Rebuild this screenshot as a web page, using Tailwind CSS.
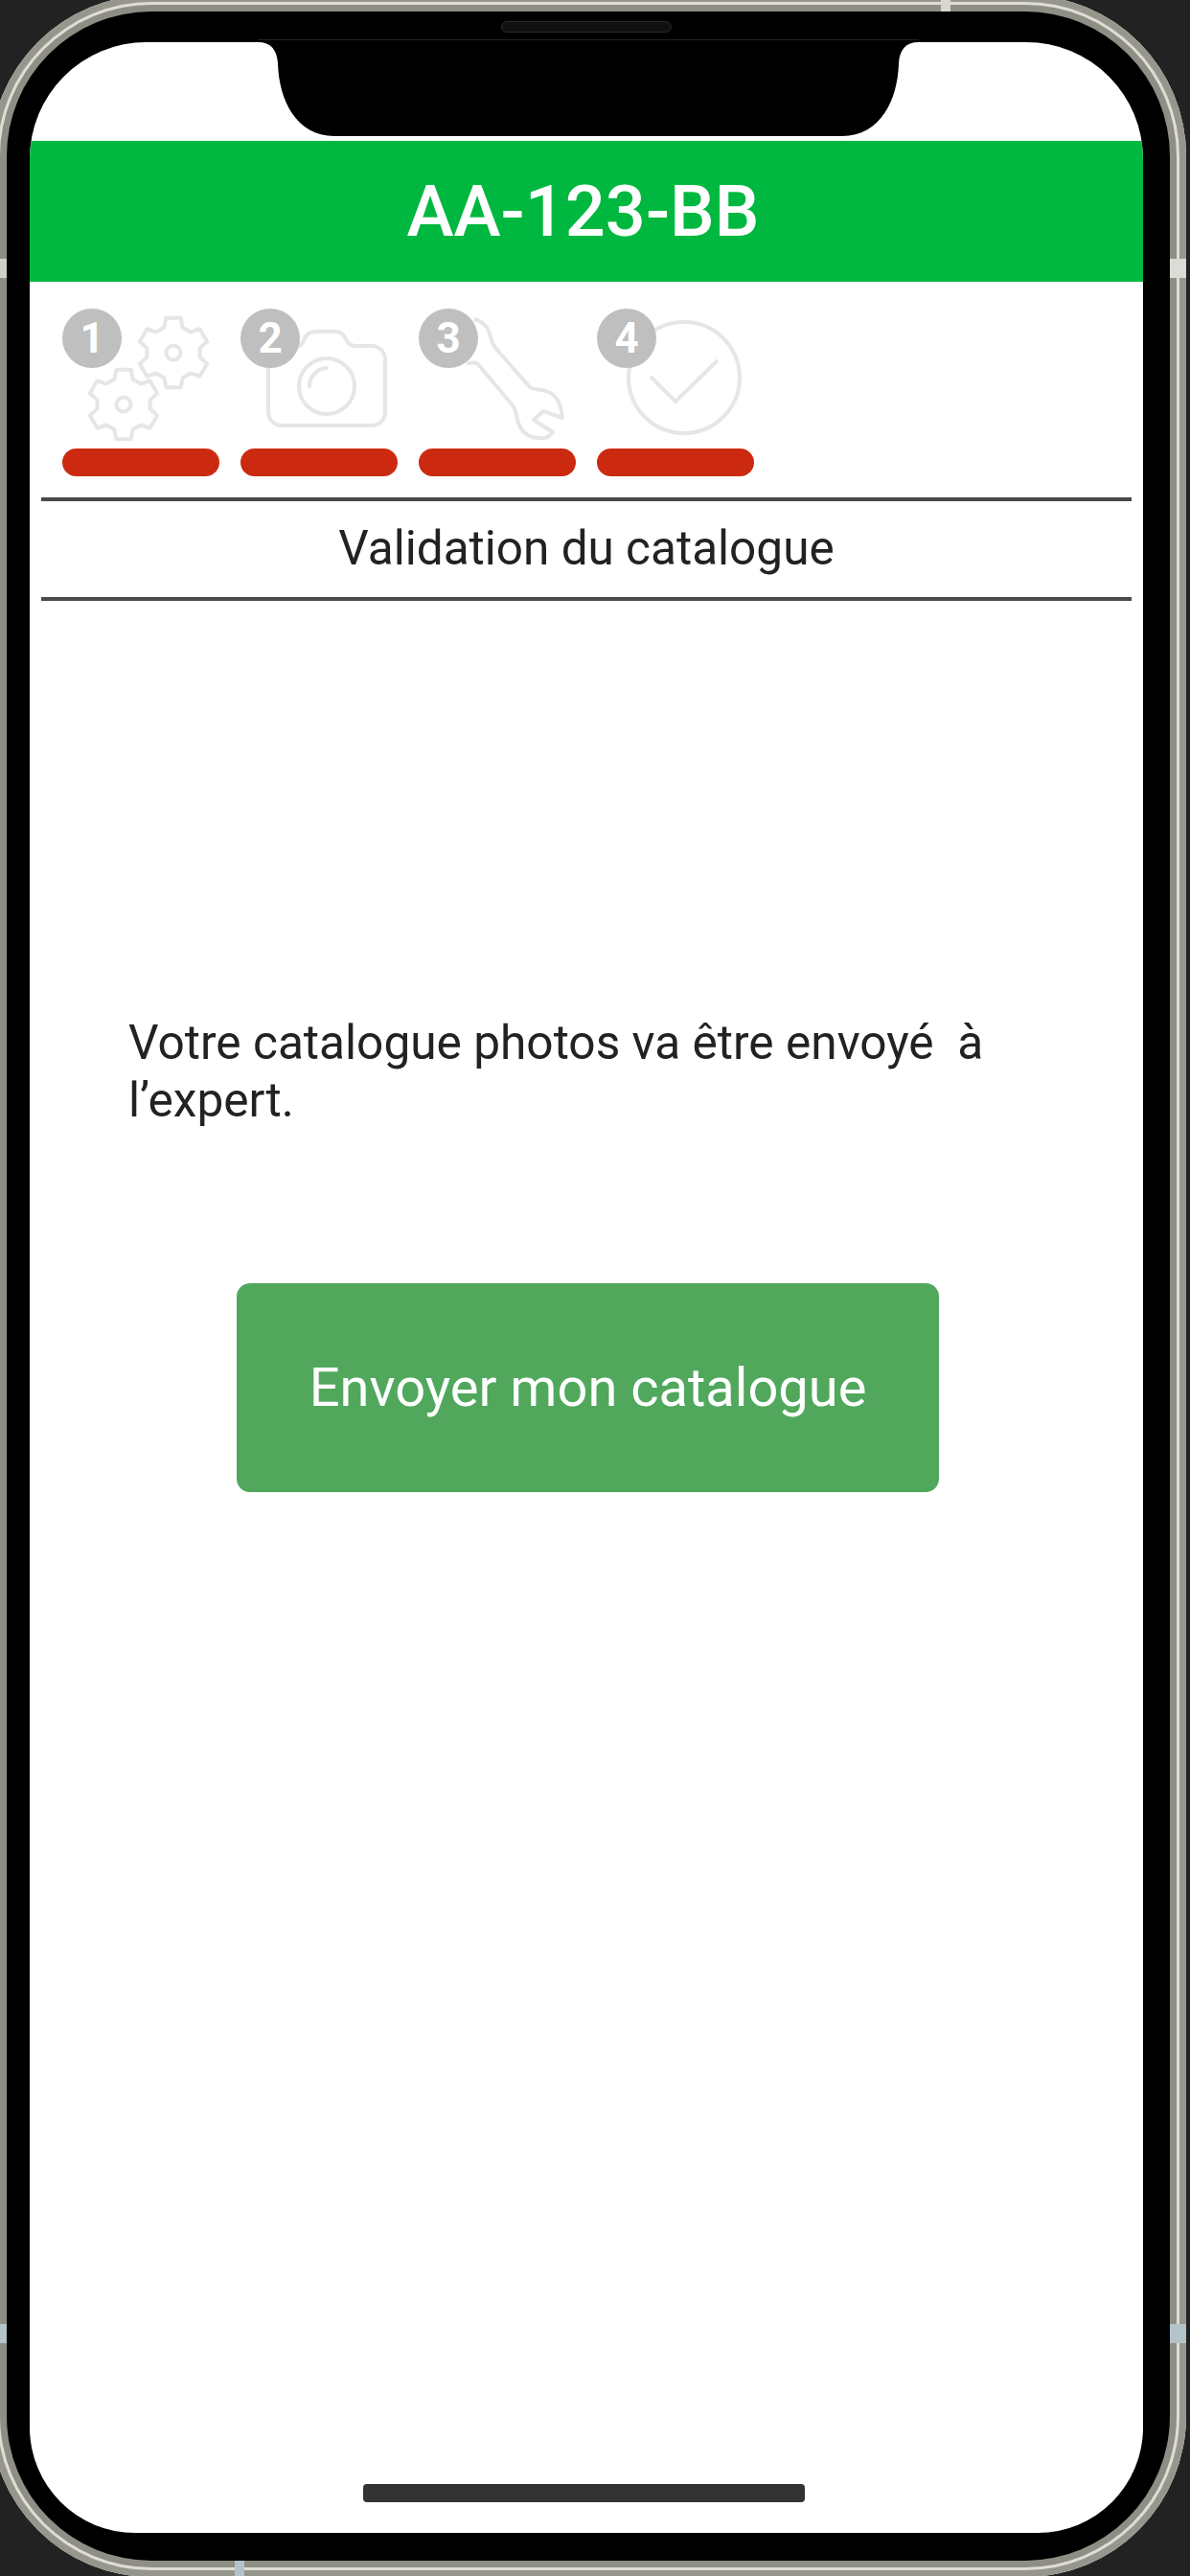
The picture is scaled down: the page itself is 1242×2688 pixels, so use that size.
<!DOCTYPE html>
<html>
<head>
	<meta charset="utf-8">
	<title>Validation du catalogue</title>
	<script src="https://cdn.jsdelivr.net/npm/@tailwindcss/browser@4"></script>
</head>
<body>

	<div class="flex w-[1242px] h-[2688px] overflow-hidden bg-[#222222] font-['Roboto',sans-serif]">

		<!-- phone frame -->
		<div class="relative shrink-0 -ml-[10px] -mt-[5px] w-[1248px] h-[2694px] pl-[41px] pt-[49px] bg-black rounded-[168px] shadow-[inset_0_0_0_7px_#96968c,inset_0_0_0_10px_#deded6,inset_0_0_0_17px_#8e8e84]">

			<!-- screen -->
			<div class="flex flex-col w-[1162px] h-[2599px] bg-white overflow-hidden rounded-t-[122px] rounded-b-[110px]">

				<div class="mt-[103px] h-[147px] flex items-center justify-center pr-[7px] bg-[#00b83f] text-white text-[74px] font-medium">AA-123-BB</div>

				<div class="flex gap-[22px] pl-[34px] pt-[28px]">
					<div class="relative w-[164px] h-[175px]">
						<svg class="w-[164px] h-[140px]" viewBox="0 0 164 140" fill="none" stroke="#e6e6e6" stroke-width="4" stroke-linejoin="round">
							<g transform="translate(116 46)">
								<polygon points="-9.58,-26.31 -7.69,-36.19 7.69,-36.19 9.58,-26.31 18,-21.45 27.5,-24.76 35.19,-11.43 27.57,-4.86 27.57,4.86 35.19,11.43 27.5,24.76 18,21.45 9.58,26.31 7.69,36.19 -7.69,36.19 -9.58,26.31 -18,21.45 -27.5,24.76 -35.19,11.43 -27.57,4.86 -27.57,-4.86 -35.19,-11.43 -27.5,-24.76 -18,-21.45"/>
								<circle r="7.5"/>
							</g>
							<g transform="translate(64 100)">
								<polygon points="-9.58,-26.31 -7.69,-36.19 7.69,-36.19 9.58,-26.31 18,-21.45 27.5,-24.76 35.19,-11.43 27.57,-4.86 27.57,4.86 35.19,11.43 27.5,24.76 18,21.45 9.58,26.31 7.69,36.19 -7.69,36.19 -9.58,26.31 -18,21.45 -27.5,24.76 -35.19,11.43 -27.57,4.86 -27.57,-4.86 -35.19,-11.43 -27.5,-24.76 -18,-21.45"/>
								<circle r="7.5"/>
							</g>
						</svg>
						<div class="absolute left-0 top-0 w-[62px] h-[62px] flex items-center justify-center rounded-full bg-[#bfbfbf] text-white text-[44px] font-bold">1</div>
						<div class="absolute left-0 bottom-0 w-[164px] h-[29px] rounded-full bg-[#cc2a10]"></div>
					</div>

					<div class="relative w-[164px] h-[175px]">
						<svg class="w-[164px] h-[140px]" viewBox="0 0 164 140" fill="none" stroke="#e6e6e6" stroke-width="4" stroke-linecap="round">
							<path d="M29 55V108a14 14 0 0 0 14 14H137a14 14 0 0 0 14-14V53a14 14 0 0 0-14-14H120c-5 0-8-3-10-7-2-5-5-8-11-8H78c-6 0-10 4-12 9-1 3-3 6-6 6"/>
							<circle cx="90" cy="81" r="29"/>
							<path d="M72 81a19 19 0 0 1 18-19"/>
						</svg>
						<div class="absolute left-0 top-0 w-[62px] h-[62px] flex items-center justify-center rounded-full bg-[#bfbfbf] text-white text-[44px] font-bold">2</div>
						<div class="absolute left-0 bottom-0 w-[164px] h-[29px] rounded-full bg-[#cc2a10]"></div>
					</div>

					<div class="relative w-[164px] h-[175px]">
						<svg class="w-[164px] h-[140px]" viewBox="0 0 164 140" fill="none" stroke="#e6e6e6" stroke-width="4" stroke-linejoin="round">
							<path d="M58 11C66 13 72 19 74 26C76 33 76 36 80 41L116 82C120 85 126 84 133 86C141 89 148 94 150 114L130 107L120 116L140 129C136 134 131 136 126 135C117 135 110 131 106 124C102 117 103 108 98 101L61 57C56 56 53 57 50 57"/>
						</svg>
						<div class="absolute left-0 top-0 w-[62px] h-[62px] flex items-center justify-center rounded-full bg-[#bfbfbf] text-white text-[44px] font-bold">3</div>
						<div class="absolute left-0 bottom-0 w-[164px] h-[29px] rounded-full bg-[#cc2a10]"></div>
					</div>

					<div class="relative w-[164px] h-[175px]">
						<svg class="w-[164px] h-[140px]" viewBox="0 0 164 140" fill="none" stroke="#e6e6e6" stroke-width="4">
							<circle cx="91" cy="72" r="58"/>
							<path d="M56 71L82 97L126 54"/>
						</svg>
						<div class="absolute left-0 top-0 w-[62px] h-[62px] flex items-center justify-center rounded-full bg-[#bfbfbf] text-white text-[44px] font-bold">4</div>
						<div class="absolute left-0 bottom-0 w-[164px] h-[29px] rounded-full bg-[#cc2a10]"></div>
					</div>
				</div>

				<div class="mt-[22px] mx-[12px] h-[108px] flex items-center justify-center pb-[2px] border-y-[4px] border-[#4a4a4a] text-[#222222] text-[49.5px]">Validation du catalogue</div>

				<p class="mt-[431px] ml-[103px] w-[1000px] text-[#222222] text-[49.6px] leading-[60px]">Votre catalogue photos va être envoyé&nbsp; à<br>l’expert.</p>

				<button class="mt-[161px] ml-[216px] w-[733px] h-[218px] rounded-[14px] bg-[#51a85d] text-white text-[56px]">Envoyer mon catalogue</button>

				<div class="mt-auto mb-[32px] ml-[348px] w-[461px] h-[19px] rounded-[4px] bg-[#333333]"></div>
			</div>

			<!-- notch -->
			<svg class="absolute left-[279px] top-[49px] w-[690px] h-[98px]" viewBox="0 0 690 98" fill="#000000">
				<path d="M0 0H690C676 0 670 8 669 22C668 60 650 98 610 98H80C40 98 22 60 21 22C20 8 14 0 0 0Z"/>
			</svg>
			<div class="absolute left-[279px] top-[46px] w-[690px] h-[1px] bg-[#222222]"></div>
			<div class="absolute left-[533px] top-[27px] w-[178px] h-[12px] rounded-full border border-[#2a2a2a] bg-[#111111]"></div>

			<!-- seams in the metal edge -->
			<div class="absolute left-[992px] top-0 w-[10px] h-[17px] bg-[#d8d8d0]"></div>
			<div class="absolute right-0 top-[275px] w-[17px] h-[20px] bg-[#dcdcd6]"></div>
			<div class="absolute left-0 top-[275px] w-[17px] h-[20px] bg-[#d0d0ca]"></div>
			<div class="absolute left-[255px] bottom-0 w-[10px] h-[17px] bg-[#b4c2ca]"></div>
			<div class="absolute right-0 top-[2430px] w-[17px] h-[20px] bg-[#b4c2ca]"></div>
			<div class="absolute left-0 top-[2430px] w-[17px] h-[20px] bg-[#b4c2ca]"></div>
		</div>
	</div>

</body>
</html>
